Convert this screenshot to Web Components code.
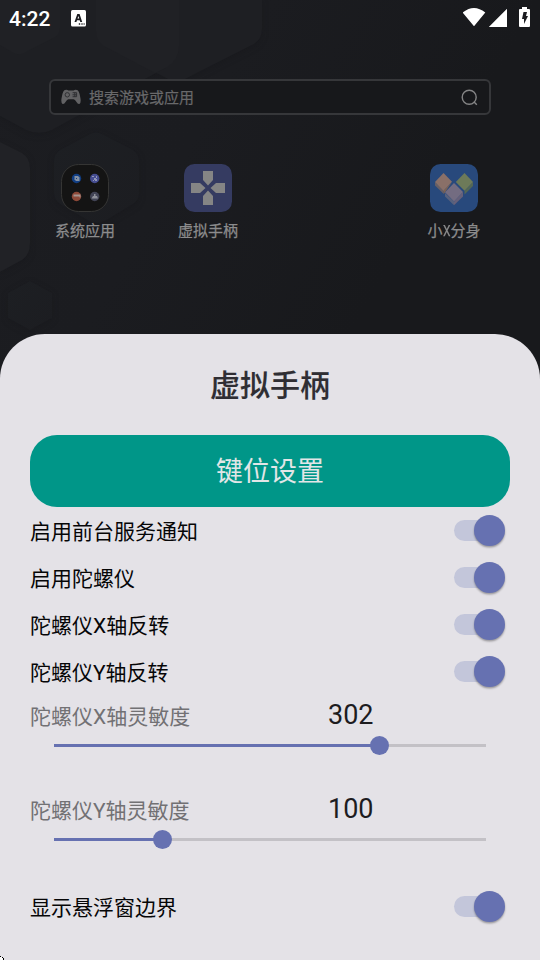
<!DOCTYPE html>
<html lang="zh-CN">
<head>
<meta charset="utf-8">
<title>虚拟手柄</title>
<style>
html,body{margin:0;height:100%;overflow:hidden;background:#1a1b1f}
body{font-family:Roboto,"Noto Sans CJK SC",sans-serif}
</style>
</head>
<body>
<phone-screen></phone-screen>
<script>
const define = (name, html) => customElements.define(name, class extends HTMLElement {
  constructor() {
    super();
    const t = document.createElement('template');
    t.innerHTML = typeof html === 'function' ? html(this) : html;
    this.attachShadow({mode: 'open'}).append(t.content.cloneNode(true));
  }
});

define('wall-paper', `
<style>:host{position:absolute;inset:0;z-index:-1}svg{display:block}</style>
<svg width="540" height="960" viewBox="0 0 540 960">
  <defs>
    <linearGradient id="bg" x1="0" y1="0" x2="1" y2="1"><stop offset="0" stop-color="#1c1d21"/><stop offset=".25" stop-color="#1b1c20"/><stop offset=".5" stop-color="#18191c"/></linearGradient>
    <linearGradient id="b" x1="0" y1="0" x2="1" y2="1"><stop offset="0" stop-color="#1d1f23"/><stop offset="1" stop-color="#1c1d21"/></linearGradient>
    <filter id="s" x="-20%" y="-20%" width="140%" height="140%" color-interpolation-filters="sRGB"><feDropShadow dx="0" dy="2" stdDeviation="3" flood-color="#131417" flood-opacity=".3"/></filter>
  </defs>
  <rect width="540" height="960" fill="url(#bg)"/>
  <g filter="url(#s)">
    <path fill="#1e1f23" d="M96 0V31Q96 41 104 46L168 79Q176 83 185 79L254 44Q262 39 262 29V0Z"/>
    <path fill="#1e1f23" d="M0 0H179V46Q179 60 167 67L52 130Q39 136 26 130L0 116Z"/>
    <path fill="#202125" d="M96 0H179V46Q179 60 167 67L155 73L104 46Q96 41 96 31Z"/>
    <path fill="#202125" d="M0 0H60V28Q60 34 55 37L24 53Q18 56 12 52L0 45Z"/>
  </g>
  <path filter="url(#s)" fill="#212226" d="M0 142L22 153Q30 158 30 168V243Q30 255 22 260L0 272Z"/>
  <path filter="url(#s)" fill="url(#b)" d="M90 134Q96 131 102 134L133 150Q139 154 139 161V194Q139 200 133 204L105 221Q97 225 89 221L60 204Q54 200 54 193V161Q54 154 60 150Z"/>
  <path filter="url(#s)" fill="url(#b)" d="M30 281L52 293V318L30 330L8 318V293Z"/>
</svg>`);

define('status-bar', `
<style>
:host{display:flex;align-items:center;height:36px;padding:0 9px;box-sizing:border-box;color:#fff}
span{font:500 21px/36px Roboto,sans-serif;width:62px;padding-top:2px}
.right{margin-left:auto;width:68px;height:36px}
svg{display:block}
</style>
<span>4:22</span>
<svg width="15" height="36" viewBox="0 0 15 36"><rect y="10" width="15" height="16.5" rx="1.5" fill="#fff"/><path d="M3.5 22L6.3 14H8.6L11.2 22H9.3L8.7 20.2H6L5.4 22ZM6.5 18.6H8.2L7.4 16Z" fill="#1b1c20" fill-rule="evenodd"/><path d="M7.8 23.3h1.4v1.4H7.8zM10.4 23.3h1.2v1.4h-1.2zM12.6 23.3h1v1.4h-1z" fill="#1b1c20"/></svg>
<svg class="right" viewBox="463 0 68 36"><path fill="#fff" d="M462.7 12.6Q474 3.5 485.3 12.6L474 26.3ZM488.8 27H507V8.8ZM522 7H527V9H529Q530 9 530 10V26Q530 27 529 27H520Q519 27 519 26V10Q519 9 520 9H522Z"/><path fill="#1b1c20" d="M523.5 12H527L526 16H528L524 24V19H522Z"/></svg>`);

define('search-box', `
<style>
:host{display:flex;align-items:center;box-sizing:border-box;height:36px;margin:43px 49px 0;padding:0 11px 0 10px;border:2px solid #36373a;border-radius:6px;background:#17181b;color:#69696b;font-size:15px;line-height:32px;-webkit-text-stroke:.2px #69696b}
.pad{margin-right:8px}.find{margin-left:auto}svg{display:block;flex:none}
.text{padding-top:2px}
</style>
<svg class="pad" width="20" height="16" viewBox="0 0 20 16"><path fill="#626264" d="M4 1Q6 .3 7.4 1.4H12.6Q14 .3 16 1Q18 1.6 19 7Q20.6 14 18.4 14.9Q17 15.5 15.3 12.8Q14 10.7 12.6 10.3H7.4Q6 10.7 4.7 12.8Q3 15.5 1.6 14.9Q-.6 14 1 7Q2 1.6 4 1Z"/><circle cx="6.3" cy="5.8" r="2.2" fill="none" stroke="#303134"/><path stroke="#303134" fill="none" d="M11.5 5.8H16M13.8 3.5V8M11.6 3.7h4v4h-4"/></svg>
<div class="text"><slot></slot></div>
<svg class="find" width="18" height="18" viewBox="0 0 18 18" fill="none" stroke="#858586" stroke-width="1.4"><circle cx="9.2" cy="9.2" r="7"/><path d="M13.8 13.8L16.8 16.8"/></svg>`);

define('app-icon', `
<style>
:host{display:flex;flex-direction:column;align-items:center;color:#8c8c8d;font-size:15px;line-height:20px;-webkit-text-stroke:.25px #8c8c8d}
.art{width:48px;height:48px;margin-bottom:9px}
</style>
<div class="art"><slot name="art"></slot></div><div><slot></slot></div>`);

define('app-grid', `
<style>:host{display:grid;grid-template-columns:repeat(4,123px);padding:49px 24px 0 23.5px}svg{display:block;-webkit-text-stroke:0}app-icon:last-child{grid-column:4}i{display:inline-block;font-style:normal;width:8px;transform:scaleX(.8);transform-origin:0 50%}</style>
<app-icon>
  <svg slot="art" width="48" height="48" viewBox="0 0 48 48"><rect x=".5" y=".5" width="47" height="47" rx="17" fill="#141414" stroke="#353534"/>
  <circle cx="15.5" cy="14.5" r="4.7" fill="#113e83"/><path d="M13.5 12h4v1h1v4h-4v-1h-1zM15 14v1h1v-1z" fill="#8491a4" fill-rule="evenodd"/>
  <circle cx="33.7" cy="14.5" r="4.7" fill="#454d91"/><path d="M31 12h2v1h-2zM35 12h1v2h-1zM33 14h2v1h1v2h-2v-1h-1zM32 16h1v1h-1z" fill="#9297b6"/>
  <circle cx="15.5" cy="32.5" r="4.7" fill="#8d4938"/><path d="M12.5 30.5h7v3h-1v-1h-6z" fill="#a5948e"/>
  <circle cx="33.7" cy="32.5" r="4.7" fill="#424455"/><path d="M33 30h1.5v2H36l1 2.5h-6.5L32 32h1z" fill="#8f919a"/></svg>系统应用
</app-icon>
<app-icon>
  <svg slot="art" width="48" height="48" viewBox="0 0 48 48"><rect width="48" height="48" rx="10.5" fill="#353b61"/><path fill="#858585" d="M19 7H29V16L24 21.5L19 16ZM19 41H29V32L24 26.5L19 32ZM7 19V29H16L21.5 24L16 19ZM41 19V29H32L26.5 24L32 19Z"/></svg>虚拟手柄
</app-icon>
<app-icon>
  <svg slot="art" width="48" height="48" viewBox="0 0 48 48"><rect width="48" height="48" rx="10.5" fill="#28497c"/>
  <path fill="#675f65" d="M5 18L13.8 26.3V30L5 21.5Z"/><path fill="#7c6252" d="M13.8 26.3L22 18L13.8 30Z"/><path fill="#8a7068" d="M13.5 9L22 17.8L13.5 26.8L5 18Z"/>
  <path fill="#536756" d="M43 18L34.5 26.8V30.5L43 22Z"/><path fill="#6d7a59" d="M34.5 9L43 18L34.5 26.8L25.8 18Z"/>
  <path fill="#57617d" d="M15 29V32.5L24 41.3V37.5Z"/><path fill="#666079" d="M33 28V32.5L24 41.3V37.5Z"/><path fill="#736c81" d="M24 19L33 28L24 37.5L15 28.3Z"/></svg>小<i>X</i>分身
</app-icon>`);

define('toggle-row', `
<style>
:host{display:flex;align-items:center;justify-content:space-between;height:47px;padding-right:5px;font-size:21px;color:#060607}
.label{padding-bottom:2px}
.track{display:flex;justify-content:flex-end;align-items:center;width:51px;height:31px}
.rail{width:42px;height:21px;border-radius:11px;background:#c3c6da;margin-right:-22px}
.thumb{width:31px;height:31px;border-radius:50%;background:#6671b1;box-shadow:0 1.5px 2px rgba(0,0,0,.32)}
</style>
<div class="label"><slot></slot></div><div class="track"><div class="rail"></div><div class="thumb"></div></div>`);

define('slider-row', el => `
<style>
:host{display:block;height:94px}
.head{display:flex;height:40px;align-items:center;font-size:21px;color:#727174}
.label{width:298px}
b{font:400 27px/40px Roboto,sans-serif;color:#1d1c1f}
.bar{display:flex;align-items:center;height:21px;margin:0 24px}
.done{width:${el.getAttribute('fill')}px;height:3px;background:#6671b1}
.dot{width:19px;height:19px;border-radius:50%;background:#6671b1;margin:0 -9.5px;flex:none;z-index:1}
.rest{flex:1;height:3px;background:#c3c1c6}
</style>
<div class="head"><div class="label"><slot></slot></div><b>${el.getAttribute('value')}</b></div>
<div class="bar"><div class="done"></div><div class="dot"></div><div class="rest"></div></div>`);

define('bottom-sheet', `
<style>
:host{display:block;box-sizing:border-box;height:626px;padding:0 30px;background:#e4e2e7;border-radius:45px 45px 0 0}
h1{box-sizing:border-box;margin:0;padding-top:2px;font-size:30px;font-weight:500;line-height:99px;height:101px;text-align:center;color:#2f2e33;-webkit-text-stroke:.15px #2f2e33}
button{display:block;box-sizing:border-box;width:480px;height:72px;border:0;border-radius:27px;background:#009688;color:#e2e6e7;font:400 27px/69px Roboto,"Noto Sans CJK SC",sans-serif;padding:3px 0 0}
</style>
<h1>虚拟手柄</h1>
<button>键位设置</button>
<slot></slot>`);

define('phone-screen', `
<style>
:host{display:flex;flex-direction:column;position:relative;z-index:0;width:540px;height:960px;overflow:hidden}
bottom-sheet{margin-top:auto}
.corner{position:absolute;left:0;bottom:0}
</style>
<wall-paper></wall-paper>
<status-bar></status-bar>
<search-box>搜索游戏或应用</search-box>
<app-grid></app-grid>
<bottom-sheet>
  <toggle-row>启用前台服务通知</toggle-row>
  <toggle-row>启用陀螺仪</toggle-row>
  <toggle-row>陀螺仪X轴反转</toggle-row>
  <toggle-row>陀螺仪Y轴反转</toggle-row>
  <slider-row value="302" fill="325.5">陀螺仪X轴灵敏度</slider-row>
  <slider-row value="100" fill="108.5">陀螺仪Y轴灵敏度</slider-row>
  <toggle-row>显示悬浮窗边界</toggle-row>
</bottom-sheet>
<svg class="corner" width="4" height="4"><path fill="#000" d="M0 0h1v1H0zM2 1h1v1H2zM3 2h1v2H3z"/><path fill="#fff" d="M0 1h2v1h1v2H0z"/></svg>`);
</script>
</body>
</html>
